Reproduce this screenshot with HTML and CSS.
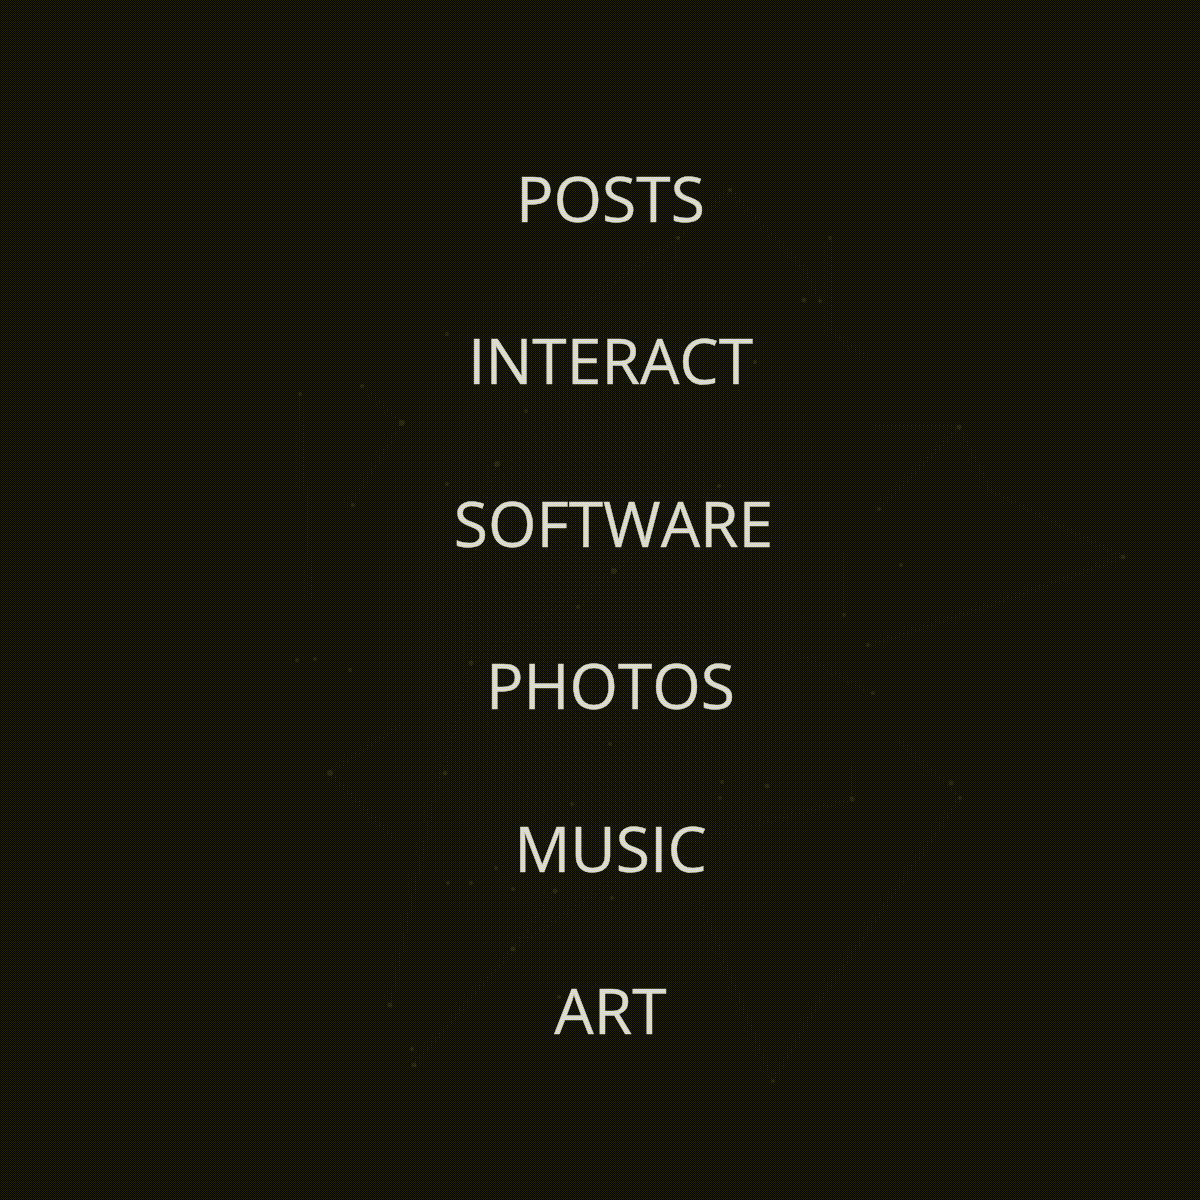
FILE: index.html
```html
<!DOCTYPE html>
<html lang="en">
<head>
<meta charset="utf-8">
<title>Home</title>
<link rel="stylesheet" href="styles.css">
</head>
<body>
<svg class="network" viewBox="0 0 1200 1200" aria-hidden="true">
<defs>
<pattern id="grain" width="4" height="4" patternUnits="userSpaceOnUse" shape-rendering="crispEdges">
<rect width="4" height="4" fill="#000"/>
<path fill="#242400" d="M0 0h1v1h-1zM2 0h1v1h-1zM1 1h1v1h-1zM3 1h1v1h-1zM0 2h1v1h-1zM2 2h1v1h-1zM1 3h1v1h-1zM3 3h1v1h-1z"/>
<path fill="#000055" d="M3 0h1v1h-1zM3 2h1v1h-1zM1 2h1v1h-1z"/>
</pattern>
<pattern id="speck" width="4" height="4" patternUnits="userSpaceOnUse" shape-rendering="crispEdges">
<path fill="#494900" d="M3 1h1v1h-1z"/>
</pattern>
<radialGradient id="glow"><stop offset="0" stop-color="#fff"/><stop offset=".6" stop-color="#bbb"/><stop offset="1" stop-color="#000"/></radialGradient>
<mask id="fade"><ellipse cx="610" cy="620" rx="240" ry="390" fill="url(#glow)"/></mask>
</defs>
<rect width="1200" height="1200" fill="url(#grain)"/>
<rect class="haze" width="1200" height="1200" fill="url(#speck)" mask="url(#fade)"/>
<g class="edges" stroke="url(#speck)">
<path d="M730 190L678 238L560 320M730 190L806 270L820 301M830 238V330L870 360M678 238L660 330M300 394L312 600M362 385L402 423L350 505M959 427L875 424M959 427L880 509M959 427L990 490L1123 557L990 605L870 645M330 773L400 725M330 773L395 840M390 1005L412 900L440 773M414 1065L513 949L660 850L852 799M513 949L555 891M773 1081L700 900M773 1081L820 1000L960 798L900 740M852 799V765M873 693L790 650M844 615V550M471 663V570L497 464M445 773L471 663L614 571M720 485L614 571L580 606"/>
</g>
<g class="nodes">
<circle cx="730" cy="190" r="2"/><circle cx="678" cy="238" r="2"/><circle cx="830" cy="238" r="2"/><circle cx="804" cy="300" r="2.5"/><circle cx="820" cy="301" r="2"/><circle cx="755" cy="362" r="2"/>
<circle cx="447" cy="334" r="2"/><circle cx="300" cy="394" r="2"/><circle cx="362" cy="386" r="2"/><circle cx="402" cy="423" r="3"/><circle cx="526" cy="411" r="2"/><circle cx="497" cy="464" r="3"/><circle cx="447" cy="484" r="2"/><circle cx="353" cy="505" r="2"/><circle cx="719" cy="486" r="2"/>
<circle cx="959" cy="427" r="2.5"/><circle cx="879" cy="509" r="2"/><circle cx="901" cy="565" r="2"/><circle cx="1123" cy="557" r="2.5"/><circle cx="844" cy="615" r="2"/><circle cx="868" cy="645" r="2"/><circle cx="873" cy="693" r="2"/>
<circle cx="614" cy="571" r="3"/><circle cx="578" cy="607" r="2"/><circle cx="297" cy="660" r="2"/><circle cx="315" cy="659" r="2"/><circle cx="350" cy="670" r="2"/><circle cx="471" cy="663" r="2.5"/><circle cx="330" cy="773" r="3"/><circle cx="445" cy="773" r="2.5"/><circle cx="610" cy="744" r="2"/>
<circle cx="722" cy="782" r="2"/><circle cx="720" cy="798" r="2"/><circle cx="767" cy="786" r="2.5"/><circle cx="852" cy="799" r="2.5"/><circle cx="951" cy="783" r="2.5"/><circle cx="960" cy="798" r="2"/>
<circle cx="572" cy="804" r="2"/><circle cx="496" cy="868" r="2"/><circle cx="448" cy="883" r="2"/><circle cx="471" cy="883" r="2"/><circle cx="513" cy="889" r="2"/><circle cx="555" cy="891" r="2.5"/><circle cx="612" cy="898" r="2"/><circle cx="513" cy="949" r="2.5"/><circle cx="559" cy="997" r="2"/><circle cx="390" cy="1005" r="2.5"/><circle cx="412" cy="1049" r="2"/><circle cx="414" cy="1065" r="2.5"/><circle cx="773" cy="1081" r="2"/>
</g>
</svg>
<nav class="menu">
<a class="link">POSTS</a>
<a class="link">INTERACT</a>
<a class="link link-wide">SOFTWARE</a>
<a class="link">PHOTOS</a>
<a class="link">MUSIC</a>
<a class="link">ART</a>
</nav>
</body>
</html>
```
FILE: styles.css
```css
body {
  margin: 0;
  height: 1200px;
  overflow: hidden;
  background: #151500;
  font-family: "Open Sans", "Noto Sans", sans-serif;
}
.network {
  position: absolute;
  inset: 0;
  width: 1200px;
  height: 1200px;
}
.haze {
  opacity: 0.5;
}
.edges {
  fill: none;
  stroke-width: 4;
  opacity: 0.6;
}
.nodes {
  fill: #49492a;
  opacity: 0.4;
}
.menu {
  position: relative;
  display: flex;
  flex-direction: column;
  align-items: center;
  padding: 117px 0 0 21px;
  color: #dbdbaa;
  background: repeating-conic-gradient(#dbdbf2 0 25%, #dbdbaa 0 50%) 0 0 / 2px 2px;
  -webkit-background-clip: text;
  background-clip: text;
  -webkit-text-fill-color: transparent;
  -webkit-text-stroke: 0.5px transparent;
}
.link {
  font-size: 62.4px;
  line-height: 162.4px;
}
.link-wide {
  padding-left: 6px;
}
```
